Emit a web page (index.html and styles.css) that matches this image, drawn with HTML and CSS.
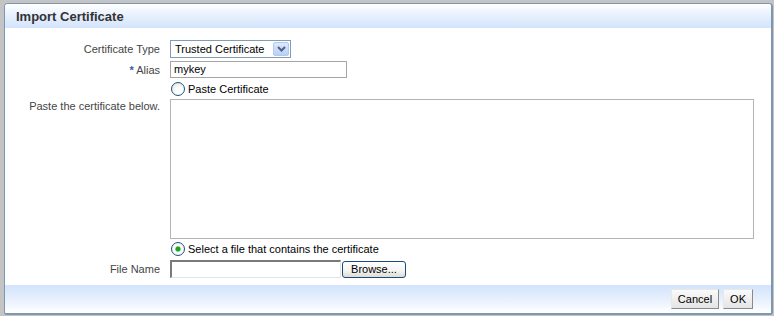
FILE: index.html
```html
<!DOCTYPE html>
<html lang="en">
<head>
    <meta charset="UTF-8">
    <title>Import Certificate</title>
    <link rel="stylesheet" href="styles.css">
</head>
<body>
    <div class="dialog">
        <div class="dialog-header">Import Certificate</div>
        <div class="dialog-body">
            <div class="form-grid">
                <label class="form-label">Certificate Type</label>
                <div class="field">
                    <div class="select-box">
                        <span class="select-text">Trusted Certificate</span>
                        <span class="select-arrow">
                            <svg width="9" height="6" viewBox="0 0 9 6"><path d="M1 1 L4.5 4.5 L8 1" fill="none" stroke="#4d6185" stroke-width="2"/></svg>
                        </span>
                    </div>
                </div>

                <label class="form-label"><span class="required">*</span> Alias</label>
                <div class="field">
                    <div class="text-input alias-input">mykey</div>
                </div>

                <div></div>
                <div class="field">
                    <span class="radio"><span class="radio-label">Paste Certificate</span></span>
                </div>

                <label class="form-label label-top">Paste the certificate below.</label>
                <div class="field">
                    <div class="text-area"></div>
                </div>

                <div></div>
                <div class="field file-choice">
                    <span class="radio checked"><span class="radio-label">Select a file that contains the certificate</span></span>
                </div>

                <label class="form-label">File Name</label>
                <div class="field file-row">
                    <div class="file-input"></div>
                    <button class="browse-btn" type="button">Browse...</button>
                </div>
            </div>
        </div>
        <div class="dialog-footer">
            <button class="btn" type="button">Cancel</button>
            <button class="btn" type="button">OK</button>
        </div>
    </div>
</body>
</html>
```

FILE: styles.css
```css
* {
    margin: 0;
    padding: 0;
    box-sizing: border-box;
}
body {
    background: #c4c4c4;
    font-family: Tahoma, "Liberation Sans", sans-serif;
    font-size: 11px;
    color: #3c3c3c;
    width: 774px;
    height: 316px;
    overflow: hidden;
}
.dialog {
    margin: 3px 1px 0 4px;
    height: 312px;
    background: #fff;
    border: 1px solid #7d97b2;
    border-right-width: 2px;
    border-bottom-width: 2px;
    border-radius: 4px 4px 3px 3px;
    display: flex;
    flex-direction: column;
    overflow: hidden;
}
.dialog-header {
    height: 24px;
    padding: 5px 0 0 11px;
    background: linear-gradient(to bottom, #ffffff 0%, #e6f0fd 50%, #d3e4fb 100%);
    font-weight: bold;
    font-size: 13px;
    color: #333;
}
.dialog-body {
    flex: 1;
    padding-top: 12px;
}
.form-grid {
    display: grid;
    grid-template-columns: 155px 1fr;
    column-gap: 10px;
    row-gap: 3px;
    padding-right: 16px;
}
.form-label {
    text-align: right;
    align-self: center;
    white-space: nowrap;
    color: #454545;
}
.label-top {
    align-self: start;
    padding-top: 1px;
}
.required {
    color: #2f5ea8;
    font-weight: bold;
}
.field {
    display: flex;
    align-items: center;
}
.select-box {
    width: 121px;
    height: 18px;
    border: 1px solid #7f9db9;
    display: flex;
    align-items: center;
    justify-content: space-between;
    padding: 0 1px 0 4px;
    color: #000;
    white-space: nowrap;
}
.select-arrow {
    width: 16px;
    height: 14px;
    background: linear-gradient(to bottom, #dde9fc, #b8cff5);
    border: 1px solid #b3c8ef;
    border-radius: 2px;
    display: flex;
    align-items: center;
    justify-content: center;
}
.text-input {
    height: 17px;
    border: 1px solid #a5a5a5;
    padding: 1px 3px;
    color: #000;
}
.alias-input {
    width: 177px;
}
.radio {
    display: flex;
    align-items: center;
    color: #000;
    height: 15px;
}
.radio::before {
    content: "";
    width: 12px;
    height: 12px;
    border: 1px solid #1c5180;
    border-radius: 50%;
    background: radial-gradient(circle at 60% 65%, #ffffff 30%, #dcdcd5 100%);
    margin: 0 3px 0 1px;
}
.radio.checked::before {
    background: radial-gradient(circle, #21a121 0 2px, #6fd26f 2.5px, #ffffff 3.2px, #ececec 100%);
}
.text-area {
    width: 584px;
    height: 140px;
    border: 1px solid #b5b5ad;
}
.file-choice {
    margin-top: -1px;
}
.file-row {
    gap: 1px;
    margin-top: 1px;
}
.file-input {
    width: 171px;
    height: 18px;
    border: 1px solid;
    border-color: #7a7a7a #e4e4e4 #e4e4e4 #7a7a7a;
    border-width: 2px 1px 1px 2px;
}
.browse-btn {
    width: 64px;
    height: 17px;
    font-family: inherit;
    font-size: 11px;
    color: #000;
    border: 1px solid #1a4a84;
    border-radius: 3px;
    background: linear-gradient(to bottom, #ffffff 0%, #f4f4f0 60%, #dcdcd2 100%);
}
.dialog-footer {
    height: 28px;
    background: linear-gradient(to bottom, #d1e3fb 0%, #e9f1fd 55%, #ffffff 100%);
    display: flex;
    justify-content: flex-end;
    align-items: center;
    gap: 4px;
    padding: 0 18px 0 0;
}
.btn {
    height: 20px;
    padding: 0 6px;
    font-family: inherit;
    font-size: 11px;
    color: #000;
    border: 1px solid;
    border-color: #e8e8e8 #8a8a8a #8a8a8a #e8e8e8;
    background: linear-gradient(to bottom, #fafafa, #e4e4e4);
}
```
